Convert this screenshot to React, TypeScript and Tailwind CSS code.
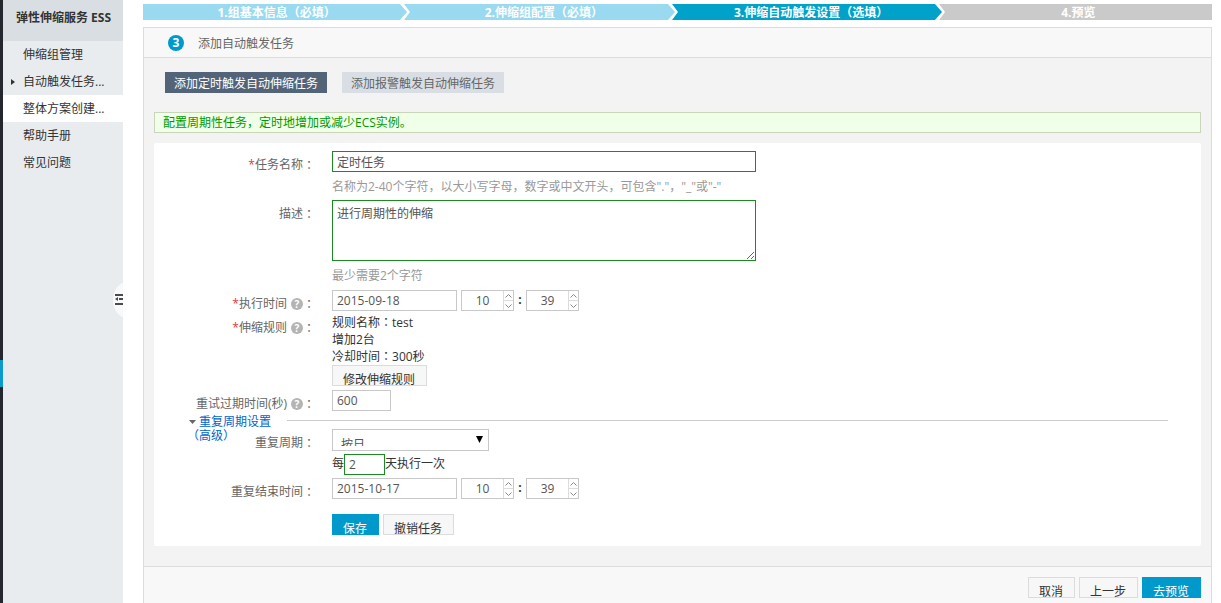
import { useState } from "react";
import type { ReactNode } from "react";
import clsx from "clsx";

const menuItems = [
  { label: "伸缩组管理" },
  { label: "自动触发任务...", hasChildren: true },
  { label: "整体方案创建...", active: true },
  { label: "帮助手册" },
  { label: "常见问题" },
];

const steps = [
  { label: "1.组基本信息（必填）", bg: "bg-[#99daf0]", fill: "fill-[#99daf0]", nextBg: "bg-[#99daf0]" },
  { label: "2.伸缩组配置（必填）", bg: "bg-[#99daf0]", fill: "fill-[#99daf0]", nextBg: "bg-[#00a2ca]" },
  { label: "3.伸缩自动触发设置（选填）", bg: "bg-[#00a2ca]", fill: "fill-[#00a2ca]", nextBg: "bg-[#cacaca]" },
  { label: "4.预览", bg: "bg-[#cacaca]" },
];

const tabs = ["添加定时触发自动伸缩任务", "添加报警触发自动伸缩任务"];

const inputClass = "block h-[21px] border border-[#c8c8c8] bg-white px-1 text-[#555] outline-none";
const validClass = "border border-[#1c8a24] bg-white px-1 text-[#555] outline-none";

// 括号和冒号居中显示
function Txt({ children }: { children: string }) {
  return (
    <>
      {children.split(/([（）：])/).map((part, index) =>
        /[（）：]/.test(part) ? (
          <span key={index} className="font-['Noto_Sans_CJK_TC',sans-serif] leading-none">
            {part}
          </span>
        ) : (
          part
        ),
      )}
    </>
  );
}

function Sidebar() {
  return (
    <aside className="relative w-[120px] shrink-0 overflow-hidden bg-[#e8ecef] text-[#333]">
      <h1 className="h-[41px] bg-[#d9dee2] pl-[13px] leading-[35px] font-bold whitespace-nowrap">弹性伸缩服务 ESS</h1>
      <nav>
        {menuItems.map((item) => (
          <a
            key={item.label}
            href="#"
            className={clsx("flex h-[27px] items-center whitespace-nowrap", item.active && "bg-white")}
          >
            <span className="flex w-5 justify-center">
              {item.hasChildren && (
                <svg width="4" height="6" viewBox="0 0 4 6">
                  <path d="M0 0l4 3-4 3z" fill="#333" />
                </svg>
              )}
            </span>
            {item.label}
          </a>
        ))}
      </nav>

      {/* 收起菜单 */}
      <button aria-label="收起菜单" className="absolute top-[283px] right-0">
        <svg width="10" height="34" viewBox="0 0 10 34">
          <ellipse cx="14" cy="17" rx="14" ry="18" fill="#f8f9fa" />
          <path d="M2 11h8v2H2zM6 15h4v2H6zM2 20h8v2H2zM2 16l3-2v4z" fill="#4a4a4a" />
        </svg>
      </button>
    </aside>
  );
}

function Stepper() {
  return (
    <ol className="flex h-4">
      {steps.map((step) => (
        <li key={step.label} className={clsx("flex flex-1 leading-4 font-bold text-white", step.bg)}>
          <span className={clsx("flex-1 pt-px text-center whitespace-nowrap", step.fill && "pl-[10px]")}>
            <Txt>{step.label}</Txt>
          </span>
          {step.fill && (
            <svg width="10" height="16" viewBox="0 0 10 16" className={step.nextBg}>
              <path d="M0 0h4l6 8-6 8H0z" fill="#fff" />
              <path d="M0 0l7 8-7 8z" className={step.fill} />
            </svg>
          )}
        </li>
      ))}
    </ol>
  );
}

type RowProps = {
  label?: string;
  htmlFor?: string;
  required?: boolean;
  help?: boolean;
  className?: string;
  children: ReactNode;
};

function Row({ label, htmlFor, required, help, className, children }: RowProps) {
  return (
    <div className={clsx("flex items-start", className)}>
      <div className="mr-[17px] -mb-[3px] flex w-[161px] shrink-0 items-center justify-end pt-1 leading-5 text-[#666]">
        {label && (
          <>
            <label htmlFor={htmlFor}>
              {required && <span className="text-[#e4393c]">*</span>}
              {label}
            </label>
            {help && (
              <span className="ml-1 h-3 w-3 rounded-full bg-[#b4b4b4] text-center text-[10px] leading-3 font-bold text-white">
                ?
              </span>
            )}
            <Txt>：</Txt>
          </>
        )}
      </div>
      <div className="min-w-0 flex-1">{children}</div>
    </div>
  );
}

function Spinner({ label, initial, max }: { label: string; initial: number; max: number }) {
  const [value, setValue] = useState(initial);

  return (
    <div className="flex h-[21px] w-[53px] border border-[#c8c8c8] bg-white">
      <input
        aria-label={label}
        value={value}
        onChange={(e) => setValue(Number(e.target.value) || 0)}
        className="w-0 flex-1 text-center text-[#555] outline-none"
      />
      <div className="flex w-[10px] flex-col divide-y divide-[#dcdcdc] border-l border-[#dcdcdc]">
        <button
          type="button"
          aria-label="增加"
          onClick={() => setValue(Math.min(max, value + 1))}
          className="flex flex-1 items-center justify-center"
        >
          <svg width="7" height="4" viewBox="0 0 7 4" fill="none" stroke="#888">
            <path d="M.5 3.5l3-3 3 3" />
          </svg>
        </button>
        <button
          type="button"
          aria-label="减少"
          onClick={() => setValue(Math.max(0, value - 1))}
          className="flex flex-1 items-center justify-center"
        >
          <svg width="7" height="4" viewBox="0 0 7 4" fill="none" stroke="#888">
            <path d="M.5.5l3 3 3-3" />
          </svg>
        </button>
      </div>
    </div>
  );
}

function DateTime({ id, date }: { id: string; date: string }) {
  return (
    <div className="flex">
      <input id={id} defaultValue={date} className={clsx(inputClass, "mr-1 w-[125px]")} />
      <Spinner label="时" initial={10} max={23} />
      <span className="w-3 text-center leading-[19px] font-bold text-[#333]">:</span>
      <Spinner label="分" initial={39} max={59} />
    </div>
  );
}

function Btn({ primary, children }: { primary?: boolean; children: ReactNode }) {
  return (
    <button
      type="button"
      className={clsx(
        "block h-[21px] overflow-hidden border pt-1 pr-[11px] pl-[10px] leading-5 whitespace-nowrap",
        primary ? "border-[#0099cc] bg-[#0099cc] text-white" : "border-[#dcdcdc] bg-[#f7f7f7] text-[#333]",
      )}
    >
      {children}
    </button>
  );
}

function TaskForm() {
  return (
    <form className="mt-[10px] rounded-xs bg-white pt-2 pb-[11px]">
      <Row label="任务名称" htmlFor="name" required>
        <input id="name" defaultValue="定时任务" className={clsx(validClass, "block h-[21px] w-[424px]")} />
        <p className="mt-[5px] leading-5 text-[#999]">
          名称为2-40个字符，以大小写字母，数字或中文开头，可包含"."，"_"或"-"
        </p>
      </Row>

      <Row label="描述" htmlFor="desc" className="mt-[3px]">
        <textarea
          id="desc"
          defaultValue="进行周期性的伸缩"
          className={clsx(validClass, "block h-[61px] w-[424px] pt-1 leading-[18px]")}
        />
        <p className="mt-[5px] leading-5 text-[#999]">最少需要2个字符</p>
      </Row>

      <Row label="执行时间" htmlFor="start" required help className="mt-1">
        <DateTime id="start" date="2015-09-18" />
      </Row>

      <Row label="伸缩规则" required help className="mt-[3px]">
        <div className="text-[#333]">
          <p className="h-[17px] leading-[18px]">
            <Txt>规则名称：test</Txt>
          </p>
          <p className="h-[17px] leading-[18px]">增加2台</p>
          <p className="h-[17px] leading-[18px]">
            <Txt>冷却时间：300秒</Txt>
          </p>
        </div>
        <Btn>修改伸缩规则</Btn>
      </Row>

      <Row label="重试过期时间(秒)" htmlFor="retry" help className="mt-1">
        <input id="retry" defaultValue="600" className={clsx(inputClass, "w-[59px]")} />
      </Row>

      {/* 重复周期（高级） */}
      <div className="mt-[2px] flex h-[29px] items-start">
        <a href="#" className="mr-4 ml-[33px] block pt-[2px] leading-[14px] text-[#0066cc]">
          <span className="flex items-center">
            <svg width="12" height="4" viewBox="0 0 12 4">
              <path d="M2 0h7L5.500 4z" fill="#666" />
            </svg>
            重复周期设置
          </span>
          <Txt>（高级）</Txt>
        </a>
        <hr className="mt-[7px] mr-[33px] flex-1 border-[#ccc]" />
      </div>

      <Row label="重复周期" htmlFor="cycle" className="-mt-[13px]">
        <div className="relative w-[157px]">
          <select
            id="cycle"
            className="block h-[22px] w-full appearance-none border border-[#c8c8c8] bg-white px-2 pt-[6px] pb-1 text-[#555] outline-none"
          >
            <option>按日</option>
            <option>按周</option>
            <option>按月</option>
          </select>
          <svg width="7" height="7" viewBox="0 0 7 7" className="pointer-events-none absolute top-[7px] right-[6px]">
            <path d="M0 0h7L3.500 7z" fill="#000" />
          </svg>
        </div>
      </Row>

      <Row className="mt-[3px]">
        <div className="flex leading-5 text-[#333]">
          <label htmlFor="days">每</label>
          <input id="days" defaultValue="2" className={clsx(validClass, "h-[21px] w-[41px]")} />
          <span>天执行一次</span>
        </div>
      </Row>

      <Row label="重复结束时间" htmlFor="end" className="mt-[3px]">
        <DateTime id="end" date="2015-10-17" />
      </Row>

      <Row className="mt-[15px]">
        <div className="flex gap-1">
          <Btn primary>保存</Btn>
          <Btn>撤销任务</Btn>
        </div>
      </Row>
    </form>
  );
}

export default function App() {
  const [currentTab, setCurrentTab] = useState(0);

  return (
    <div className="flex min-h-screen bg-white font-['Open_Sans','Noto_Sans_CJK_SC',sans-serif] text-[12px]">
      <div className="w-[3px] shrink-0 bg-[#24272e] pt-[360px]">
        <div className="h-[27px] bg-[#0e9bcb]" />
      </div>
      <Sidebar />

      <main className="mr-[9px] ml-5 flex min-w-0 flex-1 flex-col pt-1">
        <Stepper />

        <section className="mt-[7px] flex flex-1 flex-col border border-b-0 border-[#dcdcdc] bg-[#f8f8f8]">
          <header className="flex h-[30px] items-center border-b border-[#dcdcdc] pl-6">
            <span className="mr-[14px] h-4 w-4 rounded-full bg-[#0099cc] text-center leading-4 font-bold text-white">3</span>
            <h2 className="pt-[2px] text-[#666]">添加自动触发任务</h2>
          </header>

          <div className="bg-[#f3f3f3] px-[10px] pt-[14px] pb-5">
            <div className="flex gap-[15px] pl-[11px]">
              {tabs.map((tab, index) => (
                <button
                  key={tab}
                  onClick={() => setCurrentTab(index)}
                  className={clsx(
                    "h-[21px] overflow-hidden px-[9px] leading-6",
                    currentTab === index ? "bg-[#546478] text-white" : "bg-[#d9dee4] text-[#666]",
                  )}
                >
                  {tab}
                </button>
              ))}
            </div>

            <p className="mt-[19px] h-[21px] border border-[#c9d6b9] bg-[#f0ffe8] px-2 leading-5 text-[#009900]">
              配置周期性任务，定时地增加或减少ECS实例。
            </p>

            <TaskForm />
          </div>

          <footer className="flex flex-1 justify-end gap-1 border-t border-[#dcdcdc] px-[10px] pt-[10px]">
            <Btn>取消</Btn>
            <Btn>上一步</Btn>
            <Btn primary>去预览</Btn>
          </footer>
        </section>
      </main>
    </div>
  );
}
